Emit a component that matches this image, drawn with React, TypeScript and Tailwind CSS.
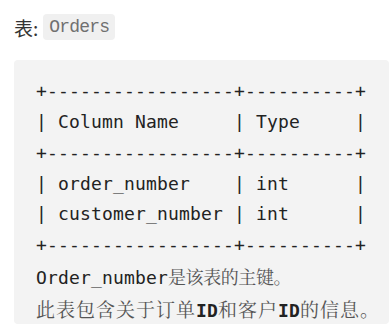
import React from 'react';

const tableLines = [
  '+-----------------+----------+',
  '| Column Name     | Type     |',
  '+-----------------+----------+',
  '| order_number    | int      |',
  '| customer_number | int      |',
  '+-----------------+----------+',
];

function Zh({ children, wide }: { children: React.ReactNode; wide?: boolean }) {
  return (
    <span
      className={
        wide
          ? "font-['Noto_Serif_CJK_SC','Noto_Sans_CJK_SC',serif] text-[#555] text-[19px] tracking-[1px]"
          : "font-['Noto_Serif_CJK_SC','Noto_Sans_CJK_SC',serif] text-[#555] text-[18px] tracking-[-0.4px]"
      }
    >
      {children}
    </span>
  );
}

export default function App() {
  return (
    <div className="bg-white min-h-[325px] font-['Noto_Sans_CJK_SC',sans-serif] text-[#333]">
      <div className="flex items-center h-[26px] pl-[14px] mt-[14px]">
        <span className="text-[19px] leading-none">表:</span>
        <code className="ml-[5px] h-[26px] flex items-center px-[6px] rounded-[4px] bg-[#f0f0f0] text-[#707070] text-[18px] tracking-[-0.8px] font-['Liberation_Mono',monospace]">
          Orders
        </code>
      </div>

      <pre className="mt-[20px] ml-[14px] h-[264px] rounded-[4px] bg-[#f3f3f3] pt-[16px] pl-[22px] text-[18px] tracking-[0.16px] leading-[30.86px] text-[#222] font-['DejaVu_Sans_Mono','Noto_Sans_CJK_SC',monospace] whitespace-pre overflow-hidden">
        {tableLines.map((line, i) => (
          <div key={i}>{line}</div>
        ))}
        <div>
          Order_number<Zh>是该表的主键。</Zh>
        </div>
        <div>
          <Zh wide>此表包含关于订单</Zh>
          <b className="font-bold">ID</b>
          <Zh wide>和客户</Zh>
          <b className="font-bold">ID</b>
          <Zh wide>的信息。</Zh>
        </div>
      </pre>
    </div>
  );
}
